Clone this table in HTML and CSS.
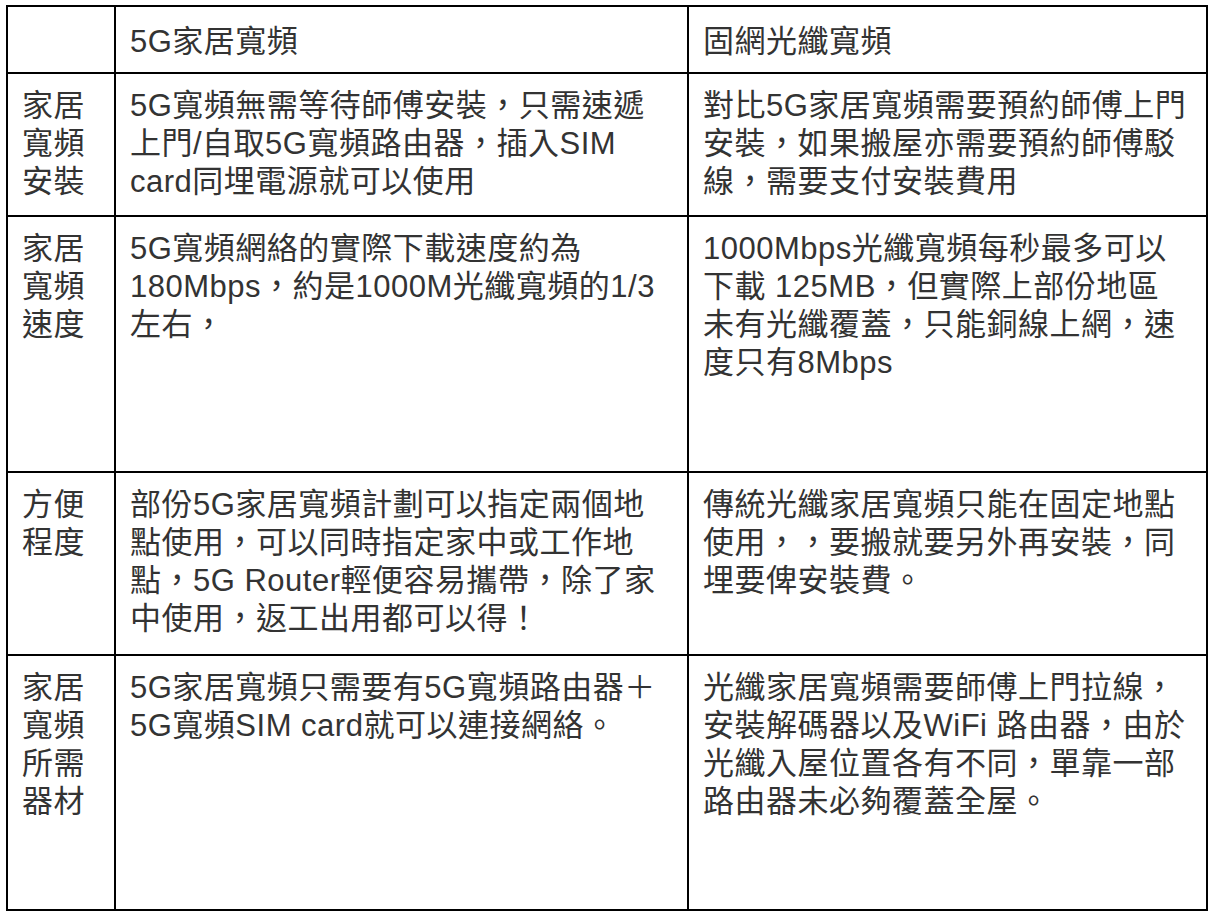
FILE: index.html
```html
<!DOCTYPE html>
<html lang="zh-Hant">
<head>
<meta charset="utf-8">
<title>5G家居寬頻 vs 固網光纖寬頻</title>
<link rel="stylesheet" href="styles.css">
</head>
<body>
<div class="compare" role="table">
  <div class="cell head" role="columnheader"></div>
  <div class="cell head body-text" role="columnheader">5G家居寬頻</div>
  <div class="cell head body-text" role="columnheader">固網光纖寬頻</div>

  <div class="cell label" role="rowheader">家居寬頻安裝</div>
  <div class="cell body-text" role="cell">5G寬頻無需等待師傅安裝，只需速遞<br>上門/自取5G寬頻路由器，插入SIM<br>card同埋電源就可以使用</div>
  <div class="cell body-text" role="cell">對比5G家居寬頻需要預約師傅上門<br>安裝，如果搬屋亦需要預約師傅駁<br>線，需要支付安裝費用</div>

  <div class="cell label" role="rowheader">家居寬頻速度</div>
  <div class="cell body-text" role="cell">5G寬頻網絡的實際下載速度約為<br>180Mbps，約是1000M光纖寬頻的1/3<br>左右，</div>
  <div class="cell body-text" role="cell">1000Mbps光纖寬頻每秒最多可以<br>下載 125MB，但實際上部份地區<br>未有光纖覆蓋，只能銅線上網，速<br>度只有8Mbps</div>

  <div class="cell label" role="rowheader">方便程度</div>
  <div class="cell body-text" role="cell">部份5G家居寬頻計劃可以指定兩個地<br>點使用，可以同時指定家中或工作地<br>點，5G Router輕便容易攜帶，除了家<br>中使用，返工出用都可以得！</div>
  <div class="cell body-text" role="cell">傳統光纖家居寬頻只能在固定地點<br>使用，，要搬就要另外再安裝，同<br>埋要俾安裝費。</div>

  <div class="cell label" role="rowheader">家居寬頻所需器材</div>
  <div class="cell body-text" role="cell">5G家居寬頻只需要有5G寬頻路由器＋<br>5G寬頻SIM card就可以連接網絡。</div>
  <div class="cell body-text" role="cell">光纖家居寬頻需要師傅上門拉線，<br>安裝解碼器以及WiFi 路由器，由於<br>光纖入屋位置各有不同，單靠一部<br>路由器未必夠覆蓋全屋。</div>
</div>
</body>
</html>
```

FILE: styles.css
```css
html, body {
  margin: 0;
  padding: 0;
  background: #ffffff;
}

.compare {
  display: grid;
  grid-template-columns: 108px 573px 519px;
  grid-template-rows: 67px 143px 256px 183px 255px;
  width: max-content;
  margin: 5px 0 0 6px;
  border-left: 2px solid #000;
  border-top: 2px solid #000;
  font-family: "Liberation Sans", "Noto Sans CJK TC", sans-serif;
  font-size: 31px;
  line-height: 38px;
  letter-spacing: 0.5px;
  color: #333333;
}

.cell {
  box-sizing: border-box;
  border-right: 2px solid #000;
  border-bottom: 2px solid #000;
  padding: 13px 14px 0 14px;
}

.head {
  padding-top: 16px;
}

.body-text {
  white-space: nowrap;
}

.label {
  word-break: break-all;
}
```
